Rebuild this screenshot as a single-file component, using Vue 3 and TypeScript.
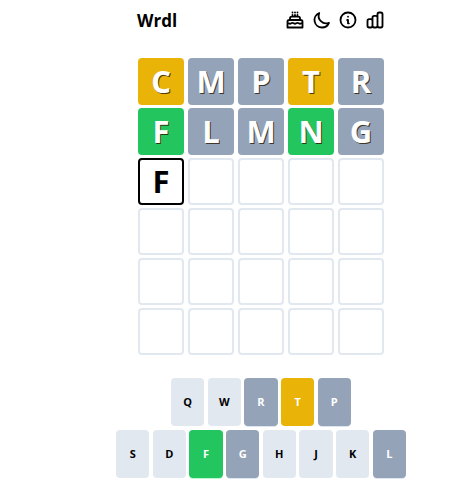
<script setup lang="ts">
type Status = 'absent' | 'present' | 'correct' | 'active' | 'empty'

interface Tile {
  letter: string
  status: Status
}

const toTiles = (word: string, codes: string): Tile[] =>
  word.split('').map((letter, i) => ({
    letter,
    status: ({ a: 'absent', p: 'present', c: 'correct' } as Record<string, Status>)[codes[i]],
  }))

const emptyRow = (): Tile[] => Array.from({ length: 5 }, () => ({ letter: '', status: 'empty' as Status }))

const rows: Tile[][] = [
  toTiles('CMPTR', 'paapa'),
  toTiles('FLMNG', 'caaca'),
  [{ letter: 'F', status: 'active' }, ...emptyRow().slice(1)],
  emptyRow(),
  emptyRow(),
  emptyRow(),
]

const keyRows = [
  [
    { key: 'Q', status: '' },
    { key: 'W', status: '' },
    { key: 'R', status: 'absent' },
    { key: 'T', status: 'present' },
    { key: 'P', status: 'absent' },
  ],
  [
    { key: 'S', status: '' },
    { key: 'D', status: '' },
    { key: 'F', status: 'correct' },
    { key: 'G', status: 'absent' },
    { key: 'H', status: '' },
    { key: 'J', status: '' },
    { key: 'K', status: '' },
    { key: 'L', status: 'absent' },
  ],
]
</script>

<template>
  <div class="page">
    <header class="navbar">
      <h1 class="title">Wrdl</h1>
      <div class="icons">
        <svg viewBox="0 0 24 24"><path d="M21 15.546c-.523 0-1.046.151-1.5.454a2.704 2.704 0 01-3 0 2.704 2.704 0 00-3 0 2.704 2.704 0 01-3 0 2.704 2.704 0 00-3 0 2.704 2.704 0 01-3 0 2.701 2.701 0 00-1.5-.454M9 6v2m3-2v2m3-2v2M9 3h.01M12 3h.01M15 3h.01M21 21v-7a2 2 0 00-2-2H5a2 2 0 00-2 2v7h18zm-3-9v-2a2 2 0 00-2-2H8a2 2 0 00-2 2v2h12z" /></svg>
        <svg viewBox="0 0 24 24"><path d="M20.354 15.354A9 9 0 018.646 3.646 9.003 9.003 0 0012 21a9.003 9.003 0 008.354-5.646z" /></svg>
        <svg viewBox="0 0 24 24"><path d="M13 16h-1v-4h-1m1-4h.01M21 12a9 9 0 11-18 0 9 9 0 0118 0z" /></svg>
        <svg viewBox="0 0 24 24"><path d="M9 19v-6a2 2 0 00-2-2H5a2 2 0 00-2 2v6a2 2 0 002 2h2a2 2 0 002-2zm0 0V9a2 2 0 012-2h2a2 2 0 012 2v10m-6 0a2 2 0 002 2h2a2 2 0 002-2m0 0V5a2 2 0 012-2h2a2 2 0 012 2v14a2 2 0 01-2 2h-2a2 2 0 01-2-2z" /></svg>
      </div>
    </header>

    <div class="grid">
      <div v-for="(row, r) in rows" :key="r" class="grid-row">
        <div v-for="(tile, c) in row" :key="c" class="tile" :class="tile.status">{{ tile.letter }}</div>
      </div>
    </div>

    <div class="keyboard">
      <div v-for="(row, r) in keyRows" :key="r" class="key-row">
        <button v-for="k in row" :key="k.key" class="key" :class="k.status">{{ k.key }}</button>
      </div>
    </div>
  </div>
</template>

<style>
html,
body {
  margin: 0;
  overflow: hidden;
  background: #fff;
}
</style>

<style scoped>
.page {
  box-sizing: border-box;
  width: 474px;
  height: 480px;
  padding-left: 48px;
  overflow: hidden;
  font-family: 'Open Sans', 'Noto Sans', sans-serif;
  color: #000;
}

.navbar {
  display: flex;
  align-items: center;
  justify-content: space-between;
  box-sizing: border-box;
  width: 250px;
  height: 40px;
  margin: 0 auto 18px;
  padding-right: 1px;
}

.title {
  margin: 0;
  padding-left: 1px;
  font-size: 17px;
  font-weight: 700;
  line-height: 1;
}

.icons {
  display: flex;
  gap: 6.67px;
}

.icons svg {
  width: 20px;
  height: 20px;
  fill: none;
  stroke: #000;
  stroke-width: 2.2;
  stroke-linecap: round;
  stroke-linejoin: round;
}

.grid {
  display: flex;
  flex-direction: column;
  gap: 3.33px;
  margin-bottom: 23px;
}

.grid-row {
  display: flex;
  justify-content: center;
  gap: 3.33px;
}

.tile {
  display: flex;
  align-items: center;
  justify-content: center;
  box-sizing: border-box;
  width: 46.67px;
  height: 46.67px;
  padding-top: 1px;
  border: 2px solid #e2e8f0;
  border-radius: 4px;
  font-size: 31px;
  font-weight: 700;
  line-height: 1;
}

.tile.absent,
.tile.present,
.tile.correct {
  color: #fff;
  text-shadow: 1px 1px 0.5px rgba(40, 25, 0, 0.8);
}

.tile.absent {
  background: #94a3b8;
  border-color: #94a3b8;
}

.tile.present {
  background: #eab308;
  border-color: #eab308;
}

.tile.correct {
  background: #22c55e;
  border-color: #22c55e;
}

.tile.active {
  border-color: #000;
}

.keyboard {
  display: flex;
  flex-direction: column;
  gap: 4px;
}

.key-row {
  display: flex;
  justify-content: center;
  gap: 3.33px;
}

.key {
  display: flex;
  align-items: center;
  justify-content: center;
  width: 33.33px;
  height: 48px;
  padding: 0;
  border: 0;
  border-radius: 4px;
  background: #e2e8f0;
  color: #000;
  font-family: inherit;
  font-size: 11px;
  font-weight: 700;
}

.key.absent {
  background: #94a3b8;
  color: #fff;
  box-shadow: 0 2px 0 -1px #dbe6f2;
}

.key.present {
  background: #eab308;
  color: #fff;
}

.key.correct {
  background: #22c55e;
  color: #fff;
  box-shadow: 0 2px 0 -1px #bbf7d0;
}
</style>
